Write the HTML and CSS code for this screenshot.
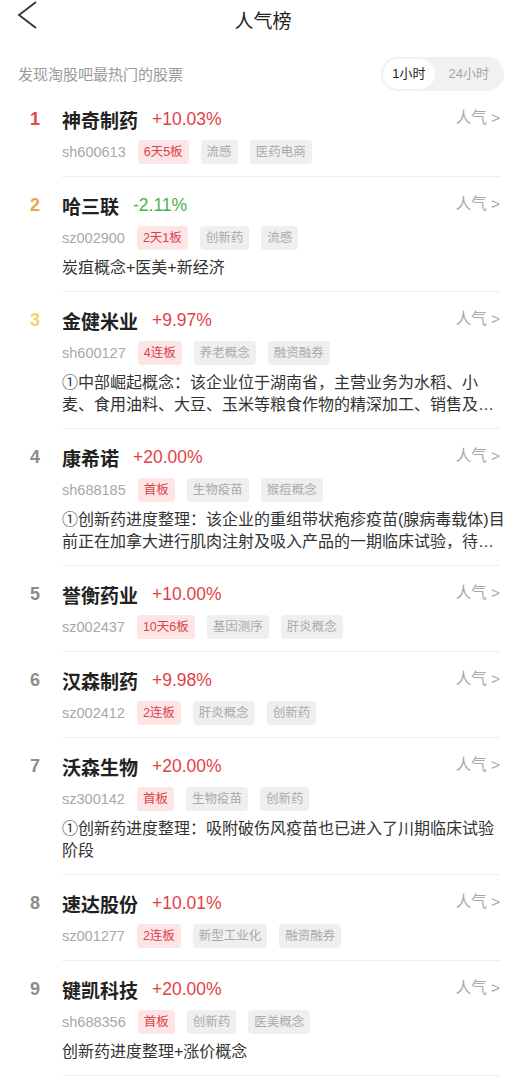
FILE: index.html
```html
<!DOCTYPE html>
<html lang="zh-CN">
<head>
  <meta charset="UTF-8">
  <meta name="viewport" content="width=device-width, initial-scale=1.0">
  <title>人气榜</title>
  <link rel="stylesheet" href="styles.css">
</head>
<body>

  <div class="nav">
    <a class="back" href="#">
      <svg width="24" height="30" viewBox="0 0 24 30"><polyline points="20,1 3,14 20,27" fill="none" stroke="#333" stroke-width="1.8" stroke-linejoin="miter"/></svg>
    </a>
    <h1>人气榜</h1>
  </div>

  <div class="subbar">
    <span class="hint">发现淘股吧最热门的股票</span>
    <div class="toggle">
      <span class="opt active">1小时</span>
      <span class="opt">24小时</span>
    </div>
  </div>

  <ul class="list">
    <li class="row">
      <span class="rank r1">1</span>
      <div class="body">
        <div class="top">
          <span class="name">神奇制药</span>
          <span class="pct up">+10.03%</span>
          <span class="hot">人气 &gt;</span>
        </div>
        <div class="meta">
          <span class="code">sh600613</span>
          <span class="tag red">6天5板</span>
          <span class="tag">流感</span>
          <span class="tag">医药电商</span>
        </div>
      </div>
    </li>
    <li class="row">
      <span class="rank r2">2</span>
      <div class="body">
        <div class="top">
          <span class="name">哈三联</span>
          <span class="pct down">-2.11%</span>
          <span class="hot">人气 &gt;</span>
        </div>
        <div class="meta">
          <span class="code">sz002900</span>
          <span class="tag red">2天1板</span>
          <span class="tag">创新药</span>
          <span class="tag">流感</span>
        </div>
        <p class="desc">炭疽概念+医美+新经济</p>
      </div>
    </li>
    <li class="row">
      <span class="rank r3">3</span>
      <div class="body">
        <div class="top">
          <span class="name">金健米业</span>
          <span class="pct up">+9.97%</span>
          <span class="hot">人气 &gt;</span>
        </div>
        <div class="meta">
          <span class="code">sh600127</span>
          <span class="tag red">4连板</span>
          <span class="tag">养老概念</span>
          <span class="tag">融资融券</span>
        </div>
        <p class="desc">①中部崛起概念：该企业位于湖南省，主营业务为水稻、小麦、食用油料、大豆、玉米等粮食作物的精深加工、销售及进出口业务。</p>
      </div>
    </li>
    <li class="row">
      <span class="rank">4</span>
      <div class="body">
        <div class="top">
          <span class="name">康希诺</span>
          <span class="pct up">+20.00%</span>
          <span class="hot">人气 &gt;</span>
        </div>
        <div class="meta">
          <span class="code">sh688185</span>
          <span class="tag red">首板</span>
          <span class="tag">生物疫苗</span>
          <span class="tag">猴痘概念</span>
        </div>
        <p class="desc">①创新药进度整理：该企业的重组带状疱疹疫苗(腺病毒载体)目前正在加拿大进行肌肉注射及吸入产品的一期临床试验，待数据公布后推进后续研究。</p>
      </div>
    </li>
    <li class="row">
      <span class="rank">5</span>
      <div class="body">
        <div class="top">
          <span class="name">誉衡药业</span>
          <span class="pct up">+10.00%</span>
          <span class="hot">人气 &gt;</span>
        </div>
        <div class="meta">
          <span class="code">sz002437</span>
          <span class="tag red">10天6板</span>
          <span class="tag">基因测序</span>
          <span class="tag">肝炎概念</span>
        </div>
      </div>
    </li>
    <li class="row">
      <span class="rank">6</span>
      <div class="body">
        <div class="top">
          <span class="name">汉森制药</span>
          <span class="pct up">+9.98%</span>
          <span class="hot">人气 &gt;</span>
        </div>
        <div class="meta">
          <span class="code">sz002412</span>
          <span class="tag red">2连板</span>
          <span class="tag">肝炎概念</span>
          <span class="tag">创新药</span>
        </div>
      </div>
    </li>
    <li class="row">
      <span class="rank">7</span>
      <div class="body">
        <div class="top">
          <span class="name">沃森生物</span>
          <span class="pct up">+20.00%</span>
          <span class="hot">人气 &gt;</span>
        </div>
        <div class="meta">
          <span class="code">sz300142</span>
          <span class="tag red">首板</span>
          <span class="tag">生物疫苗</span>
          <span class="tag">创新药</span>
        </div>
        <p class="desc">①创新药进度整理：吸附破伤风疫苗也已进入了川期临床试验阶段</p>
      </div>
    </li>
    <li class="row">
      <span class="rank">8</span>
      <div class="body">
        <div class="top">
          <span class="name">速达股份</span>
          <span class="pct up">+10.01%</span>
          <span class="hot">人气 &gt;</span>
        </div>
        <div class="meta">
          <span class="code">sz001277</span>
          <span class="tag red">2连板</span>
          <span class="tag">新型工业化</span>
          <span class="tag">融资融券</span>
        </div>
      </div>
    </li>
    <li class="row">
      <span class="rank">9</span>
      <div class="body">
        <div class="top">
          <span class="name">键凯科技</span>
          <span class="pct up">+20.00%</span>
          <span class="hot">人气 &gt;</span>
        </div>
        <div class="meta">
          <span class="code">sh688356</span>
          <span class="tag red">首板</span>
          <span class="tag">创新药</span>
          <span class="tag">医美概念</span>
        </div>
        <p class="desc">创新药进度整理+涨价概念</p>
      </div>
    </li>
  </ul>

</body>
</html>
```

FILE: styles.css
```css
* {
  box-sizing: border-box;
}
body {
  margin: 0;
  background-color: #FFFFFF;
  color: #222222;
  font-family: "Liberation Sans", "Noto Sans CJK SC", sans-serif;
}
.nav {
  height: 56px;
  display: flex;
  align-items: flex-start;
  justify-content: center;
  position: relative;
  padding-top: 9px;
}
.nav h1 {
  margin: 0;
  font-size: 19px;
  line-height: 26px;
  font-weight: normal;
  color: #222222;
}
.back {
  position: absolute;
  left: 16px;
  top: 1px;
  display: block;
  line-height: 0;
}
.subbar {
  height: 35px;
  display: flex;
  align-items: center;
  justify-content: space-between;
  padding: 0 22px 0 18px;
}
.hint {
  font-size: 15px;
  color: #9A9A9A;
}
.toggle {
  display: flex;
  align-items: center;
  height: 34px;
  padding: 2px;
  border-radius: 17px;
  background-color: #F1F1F1;
}
.opt {
  height: 30px;
  line-height: 30px;
  padding: 0 13px 0 14px;
  font-size: 13px;
  color: #A5A5A5;
  border-radius: 15px;
}
.opt.active {
  background-color: #FFFFFF;
  color: #222222;
  padding: 0 9px;
}
.list {
  list-style: none;
  margin: 0;
  padding: 0;
}
.row {
  display: flex;
  padding: 0 26px 0 24px;
}
.rank {
  width: 38px;
  flex-shrink: 0;
  padding-top: 14px;
  padding-left: 6px;
  line-height: 28px;
  font-size: 18px;
  font-weight: bold;
  color: #8C8C8C;
}
.rank.r1 { color: #E2474D; }
.rank.r2 { color: #EBA546; }
.rank.r3 { color: #F3D65E; }
.body {
  flex: 1;
  min-width: 0;
  padding: 14px 0 12px;
  border-bottom: 1px solid #EFEFEF;
}
.top {
  display: flex;
  align-items: center;
  height: 28px;
}
.name {
  font-size: 19px;
  font-weight: bold;
  color: #222222;
}
.pct {
  margin-left: 14px;
  font-size: 17.5px;
}
.pct.up { color: #E23F45; }
.pct.down { color: #4DB24A; }
.hot {
  margin-left: auto;
  align-self: flex-start;
  font-size: 15.5px;
  color: #A8A8A8;
}
.meta {
  margin-top: 7px;
  display: flex;
  align-items: center;
  gap: 12px;
  height: 24px;
}
.code {
  font-size: 14.5px;
  color: #A8A8A8;
}
.tag {
  height: 24px;
  line-height: 24px;
  padding: 0 6px;
  border-radius: 4px;
  font-size: 12.5px;
  color: #AAAAAA;
  background-color: #EFEFEF;
}
.tag.red {
  color: #D9434A;
  background-color: #FDE5E6;
}
.desc {
  margin: 7px -6px 0 0;
  font-size: 16px;
  line-height: 22px;
  color: #333333;
  display: -webkit-box;
  -webkit-line-clamp: 2;
  -webkit-box-orient: vertical;
  overflow: hidden;
}
```
